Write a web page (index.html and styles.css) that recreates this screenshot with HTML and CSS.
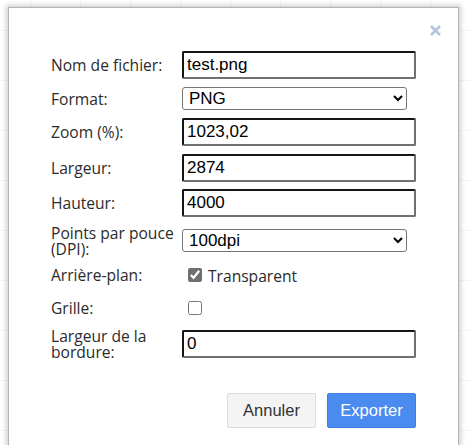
FILE: index.html
```html
<!DOCTYPE html>
<html lang="fr">
<head>
<meta charset="utf-8">
<title>Exporter</title>
<link rel="stylesheet" href="styles.css">
</head>
<body>
<div class="canvas">
  <div class="dialog">
    <button class="close" aria-label="Fermer">
      <svg width="11" height="11" viewBox="0 0 11 11"><path d="M1 1 L10 10 M10 1 L1 10" stroke="#b3c5dc" stroke-width="2.6" stroke-linecap="butt"/></svg>
    </button>
    <div class="form">
      <div class="row r1">
        <span class="lbl">Nom de fichier:</span>
        <input class="txt" type="text" value="test.png">
      </div>
      <div class="row r2">
        <span class="lbl">Format:</span>
        <select class="sel"><option>PNG</option></select>
      </div>
      <div class="row r3">
        <span class="lbl">Zoom (%):</span>
        <input class="txt" type="text" value="1023,02">
      </div>
      <div class="row r4">
        <span class="lbl">Largeur:</span>
        <input class="txt" type="text" value="2874">
      </div>
      <div class="row r5">
        <span class="lbl">Hauteur:</span>
        <input class="txt" type="text" value="4000">
      </div>
      <div class="row r6">
        <span class="lbl two">Points par pouce<br>(DPI):</span>
        <select class="sel"><option>100dpi</option></select>
      </div>
      <div class="row r7">
        <span class="lbl">Arrière-plan:</span>
        <label class="chk"><input type="checkbox" checked><span>Transparent</span></label>
      </div>
      <div class="row r8">
        <span class="lbl">Grille:</span>
        <label class="chk"><input type="checkbox"></label>
      </div>
      <div class="row r9">
        <span class="lbl two">Largeur de la<br>bordure:</span>
        <input class="txt" type="text" value="0">
      </div>
    </div>
    <div class="actions">
      <button class="btn cancel">Annuler</button>
      <button class="btn primary">Exporter</button>
    </div>
  </div>
</div>
</body>
</html>
```

FILE: styles.css
```css
html, body {
  margin: 0;
  padding: 0;
  background: #ffffff;
}
.canvas {
  width: 471px;
  height: 445px;
  overflow: hidden;
  position: relative;
  background-color: #ffffff;
  background-image:
    linear-gradient(#f4f4f4 1px, transparent 1px),
    linear-gradient(90deg, #f4f4f4 1px, transparent 1px);
  background-size: 50px 50px;
  background-position: 0 30px, 30px 0;
  padding: 7px 0 0 8px;
  box-sizing: border-box;
}
.dialog {
  position: relative;
  width: 451px;
  height: 460px;
  box-sizing: border-box;
  background: #ffffff;
  border: 1px solid #b4b4b4;
  box-shadow: 0 0 5px 2px rgba(0, 0, 0, 0.18);
  padding: 43px 42px 0 42px;
  font-family: "Open Sans", "Noto Sans", sans-serif;
  color: #2b2b2b;
}
.close {
  position: absolute;
  top: 17px;
  right: 17px;
  width: 11px;
  height: 11px;
  padding: 0;
  border: 0;
  background: none;
  display: block;
}
.close svg { display: block; }
.form {
  display: flex;
  flex-direction: column;
}
.row {
  display: flex;
  align-items: center;
}
.lbl {
  width: 131px;
  flex: none;
  font-size: 15.6px;
  line-height: 18px;
  white-space: nowrap;
  color: #2b2b2b;
}
.lbl.two { line-height: 16px; }
.txt {
  width: 234px;
  height: 28px;
  box-sizing: border-box;
  margin: 0;
  padding: 0 3px;
  border-style: solid;
  border-width: 2px;
  border-color: #161616 #707070 #707070 #161616;
  border-radius: 2px;
  font-family: "Liberation Sans", Arial, sans-serif;
  font-size: 17px;
  color: #000000;
  background: #ffffff;
  outline: none;
}
.sel {
  width: 225px;
  height: 23px;
  box-sizing: border-box;
  margin: 0;
  padding: 0 0 0 2px;
  border: 1px solid #767676;
  border-radius: 3px;
  font-family: "Liberation Sans", Arial, sans-serif;
  font-size: 17px;
  color: #000000;
  background-color: #ffffff;
}
.r1 { height: 28px; }
.r2 { height: 23px; margin-top: 8px; }
.r3 { height: 28px; margin-top: 8px; }
.r4 { height: 28px; margin-top: 8px; }
.r5 { height: 28px; margin-top: 7px; }
.r6 { height: 35px; margin-top: 6px; }
.r7 { height: 21px; margin-top: 6px; }
.r8 { height: 21px; margin-top: 12px; }
.r9 { height: 34px; margin-top: 9px; }
.chk {
  display: flex;
  align-items: center;
  gap: 6px;
  padding-left: 6px;
  font-size: 15.6px;
  color: #2b2b2b;
}
.chk span { padding-top: 3px; }
.chk input {
  width: 14px;
  height: 14px;
  margin: 0;
  accent-color: #6f6f6f;
}
.actions {
  display: flex;
  justify-content: flex-end;
  gap: 11px;
  margin-top: 32px;
  width: 365px;
}
.btn {
  width: 89px;
  height: 35px;
  box-sizing: border-box;
  margin: 0;
  border-radius: 2px;
  font-family: "Liberation Sans", Arial, sans-serif;
  font-size: 16.5px;
  padding: 0;
}
.cancel {
  background: #f4f4f4;
  border: 1px solid #dcdcdc;
  color: #333333;
}
.primary {
  background: #4a8bf0;
  border: 1px solid #3f7fe6;
  color: #ffffff;
}
```
